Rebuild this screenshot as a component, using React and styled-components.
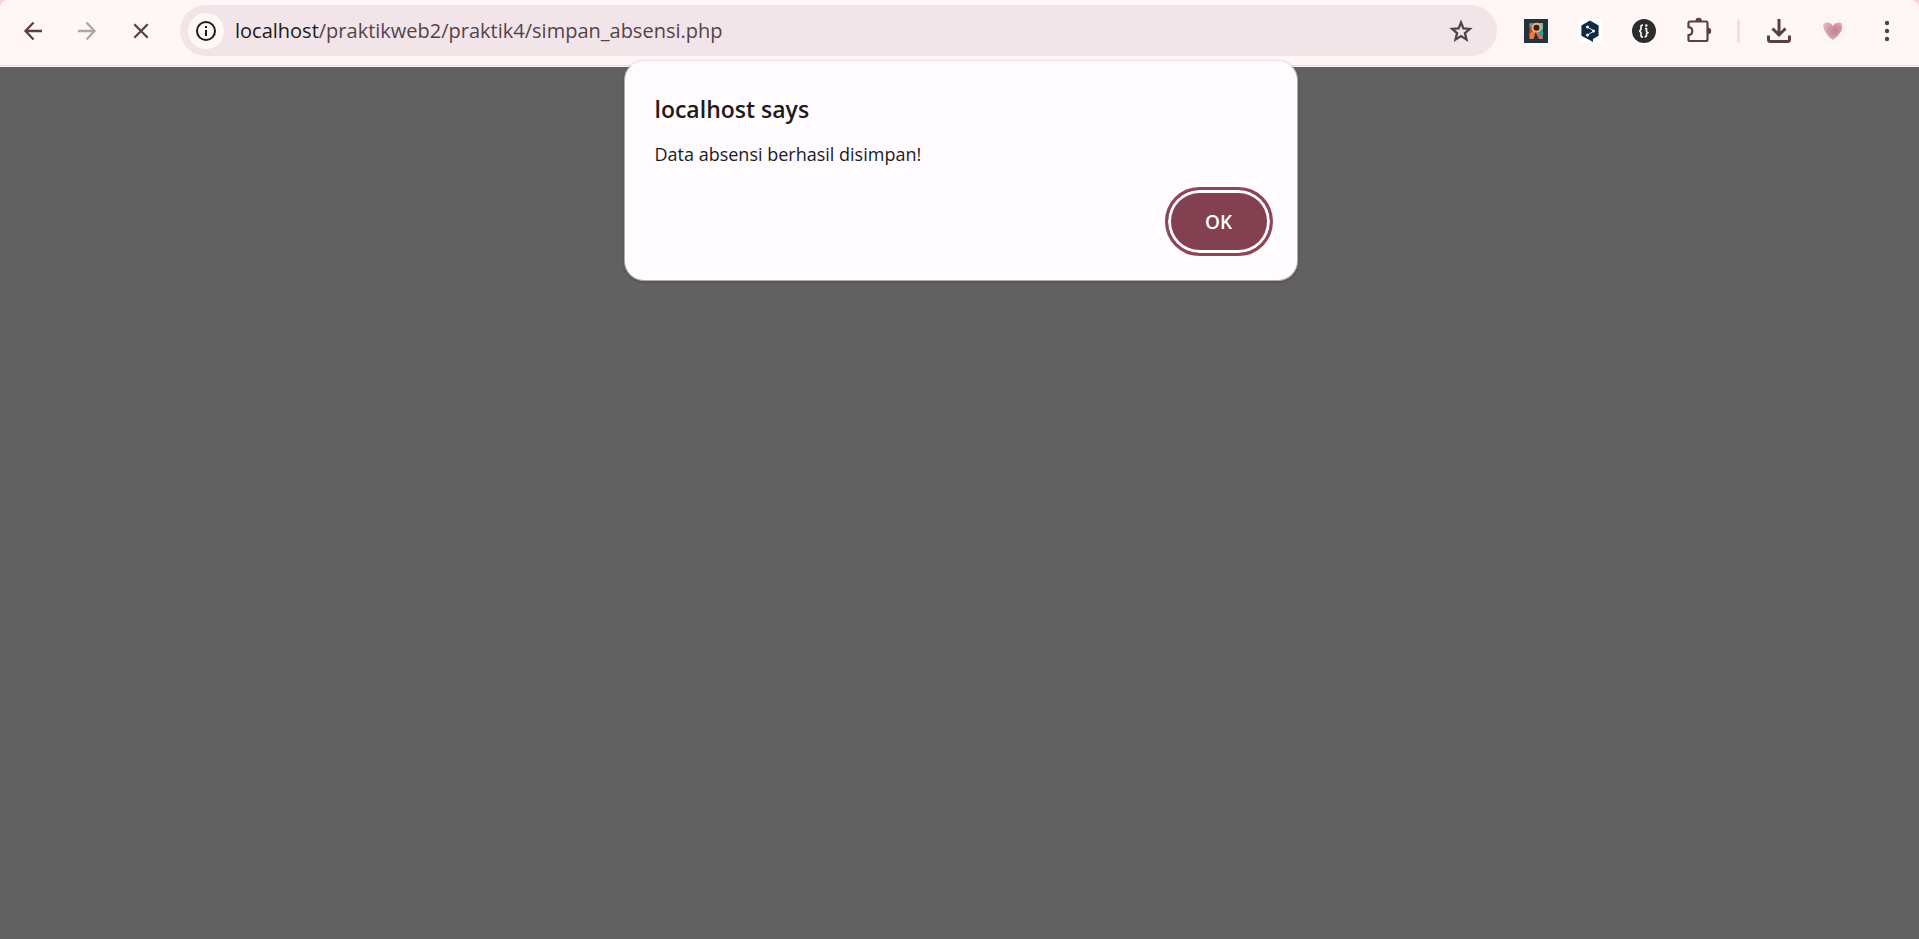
import React from "react";
import styled, { createGlobalStyle } from "styled-components";

const GlobalStyle = createGlobalStyle`
  * { box-sizing: border-box; }
  body {
    margin: 0;
    background: #616161;
    font-family: "Open Sans", "Noto Sans", sans-serif;
    color: #201a1b;
  }
`;

const Window = styled.div`
  position: relative;
  display: flex;
  flex-direction: column;
  min-height: 100vh;
`;

const Frame = styled.div`
  background: #ffccd9;
`;

const Toolbar = styled.header`
  display: flex;
  align-items: center;
  height: 67px;
  padding: 5px 5px 11px 6px;
  background: #fff7f5;
  border-radius: 8px 8px 0 0;
  box-shadow: inset 0 -1px #fff7f5, inset 0 -2px #ebdcdf;
`;

const Group = styled.div`
  display: flex;
  align-items: center;
`;

const ToolButton = styled.button`
  display: flex;
  align-items: center;
  justify-content: center;
  width: 54px;
  height: 51px;
  padding: 0;
  border: 0;
  background: none;
  color: ${(p) => (p.$muted ? "#b2a5a6" : "#5c3f46")};
`;

const AddressBar = styled.form`
  display: flex;
  flex: 1;
  align-items: center;
  height: 51px;
  margin: 0 12px;
  padding: 0 8px;
  border-radius: 26px;
  background: #f1e5e9;
`;

const SiteInfo = styled.button`
  display: flex;
  align-items: center;
  justify-content: center;
  width: 36px;
  height: 36px;
  padding: 0;
  border: 0;
  border-radius: 50%;
  background: #fff7f5;
  color: #201a1b;
`;

const Address = styled.a`
  flex: 1;
  padding-left: 11px;
  font-size: 20px;
  line-height: 28px;
  color: #55434a;
  text-decoration: none;
`;

const Host = styled.span`
  color: #201a1b;
`;

const StarButton = styled(ToolButton)`
  width: 56px;
  color: #524347;
`;

const Divider = styled.div`
  width: 3px;
  height: 24px;
  margin: 0 12px;
  border-radius: 2px;
  background: #ffd6e0;
`;

const Page = styled.main`
  flex: 1;
  background: #616161;
`;

const Overlay = styled.div`
  position: absolute;
  top: 60px;
  left: 0;
  right: 0;
  display: flex;
  justify-content: center;
  padding-left: 2px;
`;

const Dialog = styled.section`
  width: 674px;
  max-width: 100%;
  padding: 30px 24px 24px 30px;
  border: 1px solid #b5a8ab;
  border-top: 1px solid #f1e1e5;
  border-radius: 20px;
  background: #fffbff;
  box-shadow: 0 1px 3px rgba(0, 0, 0, 0.2);
`;

const Title = styled.h1`
  margin: 0;
  font-size: 23px;
  font-weight: 600;
  line-height: 36px;
`;

const Message = styled.p`
  margin: 13px 0 0;
  font-size: 18px;
  line-height: 28px;
`;

const Actions = styled.div`
  display: flex;
  justify-content: flex-end;
  margin-top: 19px;
`;

const OkButton = styled.button`
  width: 108px;
  height: 69px;
  padding: 0;
  border: 3px solid #8f4558;
  border-radius: 35px;
  background: #834051;
  box-shadow: inset 0 0 0 3px #fffbff;
  color: #ffffff;
  font-family: inherit;
  font-size: 19px;
  font-weight: 600;
`;

const Glyph = ({ size = 24, children, ...rest }) => (
  <svg width={size} height={size} viewBox="0 0 24 24" fill="none" aria-hidden="true" {...rest}>
    {children}
  </svg>
);

const line = { stroke: "currentColor", strokeWidth: 2.3 };

const BackIcon = () => (
  <Glyph>
    <path d="M21 12H4.500M12.500 3.500 4.500 12l8 8.500" {...line} />
  </Glyph>
);

const ForwardIcon = () => (
  <Glyph>
    <path d="M3 12h16.500M11.500 3.500 19.500 12l-8 8.500" {...line} />
  </Glyph>
);

const StopIcon = () => (
  <Glyph>
    <path d="m5.300 5.300 13.400 13.400M18.700 5.300 5.300 18.700" {...line} />
  </Glyph>
);

const InfoIcon = () => (
  <Glyph>
    <circle cx="12" cy="12" r="9" stroke="currentColor" strokeWidth="2" />
    <path d="M12 11v6M12 7v2" stroke="currentColor" strokeWidth="2" />
  </Glyph>
);

const StarIcon = () => (
  <Glyph>
    <path
      d="m12 3.500 2.400 5.900 6.400.5-4.900 4.200 1.600 6.500-5.500-3.500-5.500 3.500 1.600-6.500-4.900-4.200 6.400-.5Z"
      stroke="currentColor"
      strokeWidth="2.300"
    />
  </Glyph>
);

const MosaicIcon = () => (
  <Glyph>
    <path d="M0 0h24v24H0z" fill="#25313b" />
    <path d="M5.500 4H12v8l-3 3.500H5.500z" fill="#c24a38" />
    <path d="M14 4h5v7h-5z" fill="#6fbcb0" />
    <path d="M5.500 4.500h3v3h-3z" fill="#4fa39c" />
    <path d="m13 12 6-2v10h-2z" fill="#239fa8" />
    <path d="M5.500 20v-5l4.500-3.500 1.500 1.500L9.500 20z" fill="#ee7d3d" />
    <path d="m12 14 2-1 5 7h-4z" fill="#e9683f" />
    <circle cx="12.500" cy="8.800" r="4" stroke="#f5ad68" strokeWidth="2" fill="#2a2429" />
  </Glyph>
);

const TranslateIcon = () => (
  <Glyph>
    <rect width="24" height="24" rx="2" fill="#ffffff" />
    <path d="m12 1.500 8.600 5v10.300L15 20v3l-4-2.300-7.600-4V6.500Z" fill="#0f2b46" />
    <path d="m9.500 8 6.500 4-6.500 4" stroke="#ffffff" strokeWidth="0.900" />
    <circle cx="9.500" cy="8" r="1.500" fill="#ffffff" />
    <circle cx="15.500" cy="12" r="1.500" fill="#ffffff" />
    <circle cx="9.500" cy="16" r="1.500" fill="#ffffff" />
  </Glyph>
);

const BracesIcon = () => (
  <Glyph>
    <circle cx="12" cy="12" r="12" fill="#2d2d2d" />
    <path
      d="M11 6q-2 0-2 1.500v2.700L7.700 12 9 13.800v2.700Q9 18 11 18M13 9.500h1.500v3.200l1.300 1-1.300 1v1.300q0 2-2 2"
      stroke="#ffffff"
      strokeWidth="1.600"
    />
    <circle cx="14.300" cy="6.500" r="1.200" fill="#ffffff" />
  </Glyph>
);

const PuzzleIcon = () => (
  <Glyph size={28} viewBox="0 0 28 28">
    <path
      d="M7 4.500h15q1.500 0 1.500 1.500v16.500q0 1.500-1.500 1.500H6q-1.500 0-1.500-1.500V18.200c5-.5 5-7.500 0-8V6q0-1.500 1.500-1.500Z"
      stroke="currentColor"
      strokeWidth="2.200"
    />
    <path d="M11.500 4a3.200 3.200 0 0 1 6.400 0ZM24 10.800a3.200 3.200 0 0 1 0 6.400Z" fill="currentColor" />
  </Glyph>
);

const DownloadIcon = () => (
  <Glyph>
    <path d="M12 0v15M5.500 9.500 12 16l6.500-6.500" stroke="currentColor" strokeWidth="3" />
    <path d="M1.500 16.500v4q0 2 2 2h17q2 0 2-2v-4" stroke="currentColor" strokeWidth="3" />
  </Glyph>
);

const HeartIcon = () => (
  <Glyph size={28} viewBox="0 0 28 28">
    <defs>
      <radialGradient id="wash" cx="62%" cy="48%" r="60%">
        <stop offset="0" stopColor="#c48299" />
        <stop offset="0.500" stopColor="#d295a8" />
        <stop offset="1" stopColor="#dfb2c0" />
      </radialGradient>
    </defs>
    <circle cx="14" cy="14" r="14" fill="#faf7f2" />
    <path
      d="M14 9c2-4 8-4.500 9-1.500 1 5-1 9-9 15.500C9 20 3 12 4.500 7.500c2-3 7.500-2.500 9.500 1.500Z"
      fill="url(#wash)"
    />
    <path d="m8 10 3 3M8 14l4 4M17 8l-3 6M20 9l-4 8" stroke="#bf7d95" strokeWidth="1" opacity="0.500" />
  </Glyph>
);

const MenuIcon = () => (
  <Glyph>
    <circle cx="12" cy="4" r="2.200" fill="currentColor" />
    <circle cx="12" cy="12" r="2.200" fill="currentColor" />
    <circle cx="12" cy="20" r="2.200" fill="currentColor" />
  </Glyph>
);

export default function App() {
  return (
    <Window>
      <GlobalStyle />
      <Frame>
        <Toolbar>
          <Group>
            <ToolButton type="button" aria-label="Back"><BackIcon /></ToolButton>
            <ToolButton type="button" aria-label="Forward" $muted><ForwardIcon /></ToolButton>
            <ToolButton type="button" aria-label="Stop loading"><StopIcon /></ToolButton>
          </Group>
          <AddressBar>
            <SiteInfo type="button" aria-label="Site information"><InfoIcon /></SiteInfo>
            <Address href="#">
              <Host>localhost</Host>/praktikweb2/praktik4/simpan_absensi.php
            </Address>
            <StarButton type="button" aria-label="Bookmark"><StarIcon /></StarButton>
          </AddressBar>
          <Group>
            <ToolButton type="button" aria-label="Mosaic extension"><MosaicIcon /></ToolButton>
            <ToolButton type="button" aria-label="Translate extension"><TranslateIcon /></ToolButton>
            <ToolButton type="button" aria-label="JSON extension"><BracesIcon /></ToolButton>
            <ToolButton type="button" aria-label="Extensions"><PuzzleIcon /></ToolButton>
            <Divider />
            <ToolButton type="button" aria-label="Downloads"><DownloadIcon /></ToolButton>
            <ToolButton type="button" aria-label="Profile"><HeartIcon /></ToolButton>
            <ToolButton type="button" aria-label="Menu"><MenuIcon /></ToolButton>
          </Group>
        </Toolbar>
      </Frame>
      <Page />
      <Overlay>
        <Dialog role="alertdialog" aria-labelledby="dialog-title" aria-describedby="dialog-message">
          <Title id="dialog-title">localhost says</Title>
          <Message id="dialog-message">Data absensi berhasil disimpan!</Message>
          <Actions>
            <OkButton type="button">OK</OkButton>
          </Actions>
        </Dialog>
      </Overlay>
    </Window>
  );
}
